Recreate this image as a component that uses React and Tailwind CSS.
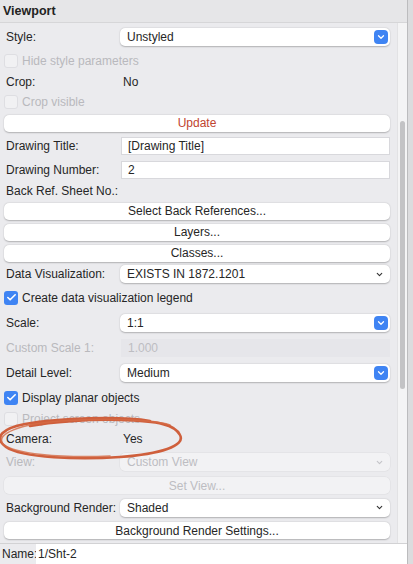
import { Check, ChevronDown } from "lucide-react";

const font = { fontFamily: '"Liberation Sans", Arial, sans-serif' };

const BlueChevron = () => (
  <span className="flex h-[14px] w-[14px] items-center justify-center rounded-[4px] bg-[#3f84f3]">
    <ChevronDown className="h-[10px] w-[10px] text-white" strokeWidth={3} />
  </span>
);

const Row = ({ h, children, className = "" }) => (
  <div className={`flex items-center ${h} ${className}`}>{children}</div>
);

const Label = ({ children, disabled }) => (
  <span
    className={`w-[120px] shrink-0 whitespace-nowrap pl-[6px] ${
      disabled ? "text-[#b9b9bd]" : "text-[#262626]"
    }`}
  >
    {children}
  </span>
);

const Select = ({ value, blue, disabled }) => (
  <div
    className={`flex h-[18px] w-[270px] items-center justify-between rounded-[5px] pl-[7px] pr-[2px] ${
      disabled
        ? "bg-[#f2f2f4] text-[#bdbdc2] shadow-[0_0_0_0.5px_rgba(0,0,0,0.06)]"
        : "bg-white text-[#262626] shadow-[0_0.5px_1.5px_rgba(0,0,0,0.25)]"
    }`}
  >
    <span>{value}</span>
    {blue ? (
      <BlueChevron />
    ) : (
      <ChevronDown
        className={`mr-[4px] h-[9px] w-[9px] ${disabled ? "text-[#c4c4c8]" : "text-[#333]"}`}
        strokeWidth={3}
      />
    )}
  </div>
);

const Input = ({ value, disabled }) => (
  <div
    className={`ml-[1px] flex h-[18px] w-[269px] items-center border pl-[6px] ${
      disabled
        ? "border-[#e6e6ea] bg-[#e6e6ea] text-[#bdbdc2]"
        : "border-[#d8d8dc] bg-white text-[#262626]"
    }`}
  >
    {value}
  </div>
);

const Button = ({ children, red, disabled }) => (
  <div
    className={`ml-[4px] flex h-[17px] w-[386px] items-center justify-center rounded-[5px] ${
      disabled
        ? "bg-[#f2f2f4] text-[#bdbdc2] shadow-[0_0_0_0.5px_rgba(0,0,0,0.06)]"
        : "bg-white shadow-[0_0.5px_1.5px_rgba(0,0,0,0.25)] " + (red ? "text-[#c0442f]" : "text-[#262626]")
    }`}
  >
    {children}
  </div>
);

const CheckRow = ({ label, checked, disabled }) => (
  <div className="flex items-center whitespace-nowrap pl-[4px]">
    {checked ? (
      <span className="flex h-[14px] w-[14px] items-center justify-center rounded-[3px] bg-[#3f84f3]">
        <Check className="h-[11px] w-[11px] text-white" strokeWidth={3.5} />
      </span>
    ) : (
      <span className="h-[14px] w-[14px] rounded-[3px] border border-[#dedee2] bg-[#f1f1f3]" />
    )}
    <span className={`ml-[4px] ${disabled ? "text-[#b9b9bd]" : "text-[#262626]"}`}>{label}</span>
  </div>
);

export default function App() {
  return (
    <div style={font} className="relative flex h-[564px] w-[413px] overflow-hidden bg-[#ebebee] text-[12px]">
      <div className="flex w-[407px] flex-col">
        {/* header */}
        <div className="flex h-[23px] items-center border-b border-[#d6d6d8] bg-[#e6e6e8] pl-[3px] text-[12.5px] font-bold text-[#222]">
          Viewport
        </div>

        <div className="flex flex-1">
          <div className="flex w-[397px] flex-col pt-[1px]">
            <Row h="h-[26px]">
              <Label>Style:</Label>
              <Select value="Unstyled" blue />
            </Row>
            <Row h="h-[22px]">
              <CheckRow label="Hide style parameters" disabled />
            </Row>
            <Row h="h-[20px]">
              <Label>Crop:</Label>
              <span className="pl-[3px] text-[#262626]">No</span>
            </Row>
            <Row h="h-[20px]">
              <CheckRow label="Crop visible" disabled />
            </Row>
            <Row h="h-[22px]">
              <Button red>Update</Button>
            </Row>
            <Row h="h-[24px]">
              <Label>Drawing Title:</Label>
              <Input value="[Drawing Title]" />
            </Row>
            <Row h="h-[23px]">
              <Label>Drawing Number:</Label>
              <Input value="2" />
            </Row>
            <Row h="h-[20px]">
              <Label>Back Ref. Sheet No.:</Label>
            </Row>
            <Row h="h-[20px]">
              <Button>Select Back References...</Button>
            </Row>
            <Row h="h-[22px]">
              <Button>Layers...</Button>
            </Row>
            <Row h="h-[20px]">
              <Button>Classes...</Button>
            </Row>
            <Row h="h-[22px]">
              <Label>Data Visualization:</Label>
              <Select value="EXISTS IN 1872.1201" />
            </Row>
            <Row h="h-[25px]">
              <CheckRow label="Create data visualization legend" checked />
            </Row>
            <Row h="h-[25px]">
              <Label>Scale:</Label>
              <Select value="1:1" blue />
            </Row>
            <Row h="h-[25px]">
              <Label disabled>Custom Scale 1:</Label>
              <Input value="1.000" disabled />
            </Row>
            <Row h="h-[25px]">
              <Label>Detail Level:</Label>
              <Select value="Medium" blue />
            </Row>
            <Row h="h-[25px]">
              <CheckRow label="Display planar objects" checked />
            </Row>
            <Row h="h-[17px]">
              <CheckRow label="Project screen objects" disabled />
            </Row>
            <Row h="h-[23px]">
              <Label>Camera:</Label>
              <span className="pl-[3px] text-[#262626]">Yes</span>
            </Row>
            <Row h="h-[24px]">
              <Label disabled>View:</Label>
              <Select value="Custom View" disabled />
            </Row>
            <Row h="h-[23px]">
              <Button disabled>Set View...</Button>
            </Row>
            <Row h="h-[21px]">
              <Label>Background Render:</Label>
              <Select value="Shaded" />
            </Row>
            <Row h="h-[25px]">
              <Button>Background Render Settings...</Button>
            </Row>
          </div>

          {/* scrollbar */}
          <div className="flex w-[10px] justify-center border-l border-[#e2e2e4] bg-[#f4f4f5] pt-[98px]">
            <div className="h-[268px] w-[5px] rounded-full bg-[#c3c3c5]" />
          </div>
        </div>

        {/* name field */}
        <div className="flex h-[21px] items-center border-t border-[#d2d2d4] bg-[#ebebee]">
          <span className="w-[36px] pl-[2px] text-[#262626]">Name:</span>
          <div className="flex h-full flex-1 items-center bg-white pl-[2px] text-[#262626]">1/Sht-2</div>
        </div>
      </div>

      {/* right edge */}
      <div className="w-[6px] border-l border-[#bcbcbe] bg-[#dcdcde]" />

      {/* hand-drawn annotation */}
      <svg className="pointer-events-none absolute left-0 top-[410px]" width="200" height="60" viewBox="0 0 200 60">
        <path
          d="M150 11 C120 6 60 8 25 14 C4 18 -8 27 6 37 C22 48 80 50 120 47 C160 44 186 36 180 25 C175 15 160 11 120 10 C90 9 50 12 30 16"
          fill="none"
          stroke="#cf5f3c"
          strokeWidth="2.6"
          strokeLinecap="round"
        />
        <path
          d="M170 15 C150 9 100 8 60 11 C20 14 -5 24 3 34 C14 44 60 48 110 46"
          fill="none"
          stroke="#d46a45"
          strokeWidth="1.6"
          strokeLinecap="round"
          opacity="0.8"
        />
      </svg>
    </div>
  );
}
